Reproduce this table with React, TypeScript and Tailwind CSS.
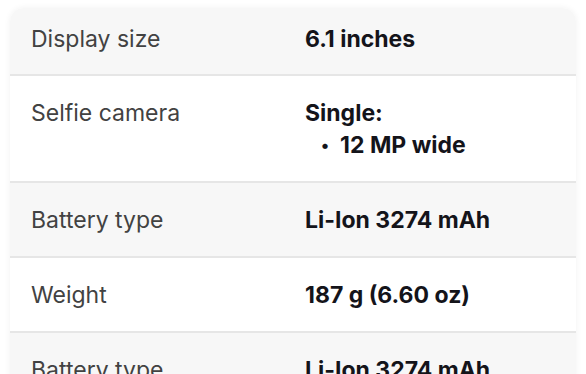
const rows = [
  { label: "Display size", value: ["6.1 inches"], tone: "gray", first: true },
  { label: "Selfie camera", value: ["Single:", "12 MP wide"], tone: "white", bullet: true },
  { label: "Battery type", value: ["Li-Ion 3274 mAh"], tone: "gray" },
  { label: "Weight", value: ["187 g (6.60 oz)"], tone: "white" },
  { label: "Battery type", value: ["Li-Ion 3274 mAh"], tone: "gray" },
];

export default function App() {
  return (
    <div
      className="h-[374px] w-[586px] overflow-hidden bg-white pl-[10px] pt-[8px]"
      style={{ fontFamily: "Inter, 'Noto Sans', sans-serif" }}
    >
      <div className="w-[566px] overflow-hidden rounded-t-[14px] shadow-[0_0_6px_rgba(0,0,0,0.06)]">
        {rows.map((row, i) => (
          <div
            key={i}
            className={`flex border-b-2 border-[#e6e6e6] pl-[21px] ${
              row.tone === "gray" ? "bg-[#f7f7f7]" : "bg-white"
            } ${row.first ? "pt-[15px] pb-[19px]" : "pt-[21px] pb-[20px]"}`}
          >
            <div className="w-[274px] shrink-0 text-[23px] leading-[32px] text-[#424242]">
              {row.label}
            </div>
            <div className="text-[23px] font-bold leading-[32px] text-[#14141a]">
              <div>{row.value[0]}</div>
              {row.bullet && (
                <div className="flex items-center pl-[16px]">
                  <span className="mr-[11px] text-[17px]">•</span>
                  <span>{row.value[1]}</span>
                </div>
              )}
            </div>
          </div>
        ))}
      </div>
    </div>
  );
}
